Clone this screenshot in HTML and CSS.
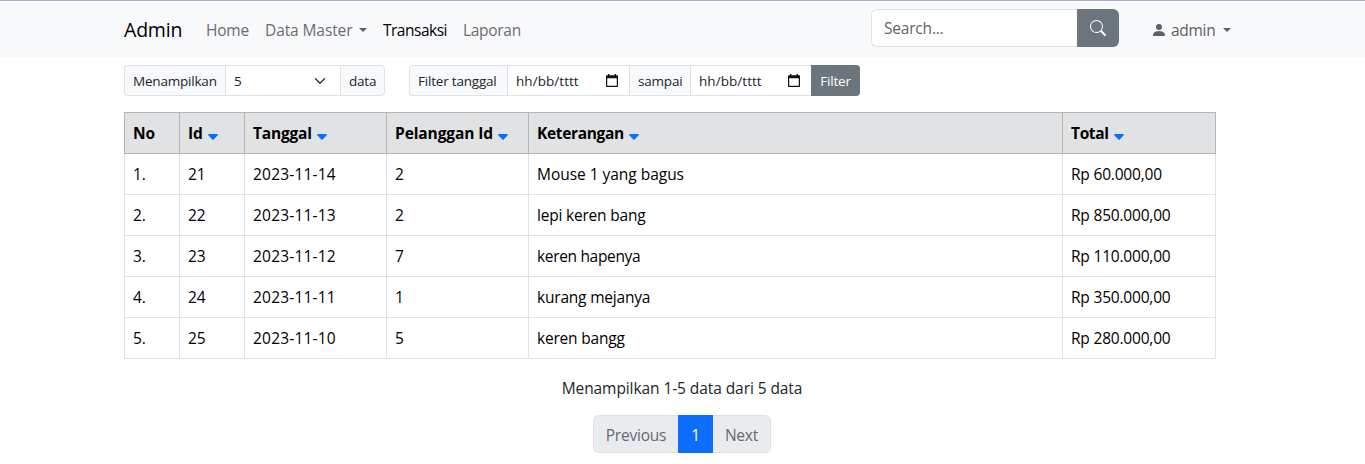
FILE: index.html
```html
<!DOCTYPE html>
<html lang="id">
<head>
<meta charset="utf-8">
<title>Transaksi</title>
<link rel="stylesheet" href="styles.css">
</head>
<body>
<nav class="navbar">
  <div class="container nav-row">
    <a class="brand">Admin</a>
    <ul class="nav-links">
      <li class="nav-home">Home</li>
      <li class="nav-master">Data Master<span class="caret"></span></li>
      <li class="nav-trans active">Transaksi</li>
      <li class="nav-report">Laporan</li>
    </ul>
    <form class="search">
      <div class="search-input">Search...</div>
      <div class="search-button">
        <svg width="16" height="16" viewBox="0 0 16 16" fill="currentColor"><path d="M11.742 10.344a6.5 6.5 0 1 0-1.397 1.398h-.001c.03.04.062.078.098.115l3.85 3.85a1 1 0 0 0 1.415-1.414l-3.85-3.85a1.007 1.007 0 0 0-.115-.1zM12 6.5a5.5 5.5 0 1 1-11 0 5.5 5.5 0 0 1 11 0z"/></svg>
      </div>
    </form>
    <div class="user">
      <svg width="16" height="16" viewBox="0 0 16 16" fill="currentColor"><path d="M3 14s-1 0-1-1 1-4 6-4 6 3 6 4-1 1-1 1zm5-6a3 3 0 1 0 0-6 3 3 0 0 0 0 6"/></svg>
      <span class="user-name">admin</span><span class="caret"></span>
    </div>
  </div>
</nav>
<main class="container">
  <div class="filters">
    <div class="group">
      <span class="addon w-show">Menampilkan</span>
      <div class="field w-select">5
        <svg width="16" height="12" viewBox="0 0 16 16" fill="none" stroke="#343a40" stroke-width="2" stroke-linecap="round" stroke-linejoin="round"><path d="m2 5 6 6 6-6"/></svg>
      </div>
      <span class="addon w-data">data</span>
    </div>
    <div class="group">
      <span class="addon w-date">Filter tanggal</span>
      <div class="field w-from"><span class="date-text">hh/bb/tttt</span>
        <svg class="calendar" width="12" height="13" viewBox="0 0 12 13" fill="#111"><path d="M2 0h1.4v1.3h5.2V0H10v1.3h1.2c.5 0 .8.3.8.8v10c0 .5-.3.9-.8.9H.8c-.5 0-.8-.4-.8-.9v-10c0-.5.3-.8.8-.8H2zM1.2 4.2v7.6h9.6V4.2z"/></svg>
      </div>
      <span class="addon w-until">sampai</span>
      <div class="field w-to"><span class="date-text">hh/bb/tttt</span>
        <svg class="calendar" width="12" height="13" viewBox="0 0 12 13" fill="#111"><path d="M2 0h1.4v1.3h5.2V0H10v1.3h1.2c.5 0 .8.3.8.8v10c0 .5-.3.9-.8.9H.8c-.5 0-.8-.4-.8-.9v-10c0-.5.3-.8.8-.8H2zM1.2 4.2v7.6h9.6V4.2z"/></svg>
      </div>
      <span class="filter-button">Filter</span>
    </div>
  </div>
  <table class="data">
    <colgroup><col class="c-no"><col class="c-id"><col class="c-date"><col class="c-cust"><col class="c-note"><col class="c-total"></colgroup>
    <thead>
      <tr>
        <th>No</th>
        <th>Id<svg class="sort" width="10" height="6" viewBox="0 0 10 6"><path d="M.8 0h8.4c.8 0 1 .8.5 1.3L5.7 5.6c-.4.5-1 .5-1.4 0L.3 1.3C-.2.8 0 0 .8 0z"/></svg></th>
        <th>Tanggal<svg class="sort" width="10" height="6" viewBox="0 0 10 6"><path d="M.8 0h8.4c.8 0 1 .8.5 1.3L5.7 5.6c-.4.5-1 .5-1.4 0L.3 1.3C-.2.8 0 0 .8 0z"/></svg></th>
        <th class="th-cust">Pelanggan Id<svg class="sort" width="10" height="6" viewBox="0 0 10 6"><path d="M.8 0h8.4c.8 0 1 .8.5 1.3L5.7 5.6c-.4.5-1 .5-1.4 0L.3 1.3C-.2.8 0 0 .8 0z"/></svg></th>
        <th class="th-note">Keterangan<svg class="sort" width="10" height="6" viewBox="0 0 10 6"><path d="M.8 0h8.4c.8 0 1 .8.5 1.3L5.7 5.6c-.4.5-1 .5-1.4 0L.3 1.3C-.2.8 0 0 .8 0z"/></svg></th>
        <th class="th-total">Total<svg class="sort" width="10" height="6" viewBox="0 0 10 6"><path d="M.8 0h8.4c.8 0 1 .8.5 1.3L5.7 5.6c-.4.5-1 .5-1.4 0L.3 1.3C-.2.8 0 0 .8 0z"/></svg></th>
      </tr>
    </thead>
    <tbody>
      <tr><td>1.</td><td>21</td><td class="date">2023-11-14</td><td>2</td><td class="wide">Mouse 1 yang bagus</td><td>Rp 60.000,00</td></tr>
      <tr><td>2.</td><td>22</td><td class="date">2023-11-13</td><td>2</td><td>lepi keren bang</td><td>Rp 850.000,00</td></tr>
      <tr><td>3.</td><td>23</td><td class="date">2023-11-12</td><td>7</td><td class="tight">keren hapenya</td><td>Rp 110.000,00</td></tr>
      <tr><td>4.</td><td>24</td><td class="date">2023-11-11</td><td>1</td><td>kurang mejanya</td><td>Rp 350.000,00</td></tr>
      <tr><td>5.</td><td>25</td><td class="date">2023-11-10</td><td>5</td><td>keren bangg</td><td>Rp 280.000,00</td></tr>
    </tbody>
  </table>
  <p class="summary">Menampilkan 1-5 data dari 5 data</p>
  <div class="pagination">
    <span class="page prev">Previous</span>
    <span class="page current">1</span>
    <span class="page next">Next</span>
  </div>
</main>
</body>
</html>
```
FILE: styles.css
```css
* { box-sizing: border-box; }
body {
  margin: 0;
  background: #fff;
  color: #212529;
  font: 15.5px/24px "Open Sans", "Noto Sans", sans-serif;
  letter-spacing: -0.2px;
  overflow: hidden;
}
.container { width: 1117px; padding-right: 25px; margin-left: 124px; }
.navbar { height: 57px; background: #f8f9fb; border-top: 1px solid #a6b0c9; }
.nav-row { display: flex; align-items: center; height: 56px; padding: 0; }
.nav-row > * { flex-shrink: 0; }
.brand { width: 82px; padding-top: 1px; font-size: 19.5px; line-height: 30px; color: #000; }
.nav-links { display: flex; margin: 0; padding: 1px 0 0; list-style: none; color: #6b6c6d; }
.nav-links li { white-space: nowrap; }
.nav-home { width: 59px; }
.nav-master { width: 118px; letter-spacing: -0.1px; }
.nav-trans { width: 80px; letter-spacing: -0.5px; }
.nav-report { width: 60px; letter-spacing: -0.3px; }
.nav-links .active { color: #000; }
.caret {
  display: inline-block;
  margin-left: 7px;
  vertical-align: 4px;
  border: 4.5px solid transparent;
  border-top-color: #5f6061;
  border-bottom: 0;
}
.search { display: flex; width: 248px; height: 38px; margin: 0 0 2px 348px; }
.search-input {
  width: 206px;
  padding: 6px 12px;
  border: 1px solid #dee2e6;
  border-right: 0;
  border-radius: 6px 0 0 6px;
  background: #fff;
  color: #5f6468;
}
.search-button {
  display: flex;
  align-items: center;
  justify-content: center;
  width: 42px;
  border-radius: 0 6px 6px 0;
  background: #6c757d;
  color: #fff;
}
.user { display: flex; align-items: center; margin-left: 32px; padding-top: 1px; color: #5f6061; }
.user-name { margin-left: 4px; letter-spacing: -0.3px; }
.user .caret { margin-left: 8px; }
.filters { display: flex; gap: 24px; margin-top: 8px; font-size: 13.5px; line-height: 21px; }
.group { display: flex; height: 31px; }
.addon, .field { border: 1px solid #dee2e6; border-right: 0; padding: 5px 8px 3px; white-space: nowrap; }
.addon { background: #f8f9fa; }
.addon:first-child { border-radius: 4px 0 0 4px; }
.addon:last-child { border-right: 1px solid #dee2e6; border-radius: 0 4px 4px 0; }
.field { display: flex; align-items: center; justify-content: space-between; background: #fff; }
.w-show { width: 101px; }
.w-select { width: 115px; padding-right: 12px; }
.w-data { width: 45px; }
.w-date { width: 98px; }
.w-from { width: 122px; padding-right: 11px; }
.w-until { width: 61px; }
.w-to { width: 121px; padding-right: 11px; }
.date-text { letter-spacing: 0.05px; }
.field svg { margin-bottom: 2px; }
.filter-button {
  width: 49px;
  padding: 6px 0 4px;
  border-radius: 0 4px 4px 0;
  background: #6c757d;
  color: #fff;
  text-align: center;
}
.data {
  width: 1092px;
  margin-top: 16px;
  border-spacing: 0;
  table-layout: fixed;
  color: #000;
}
.c-no { width: 56px; }
.c-id { width: 65px; }
.c-date, .c-cust { width: 142px; }
.c-note { width: 534px; }
.c-total { width: 153px; }
th, td {
  height: 41px;
  padding: 8px;
  border: solid #dee2e6;
  border-width: 0 1px 1px 0;
  text-align: left;
  white-space: nowrap;
}
th { height: 42px; border-color: #b4b5b7; border-top-width: 1px; background: #e1e2e4; }
th:first-child, td:first-child { border-left-width: 1px; }
.date { letter-spacing: 0.2px; }
.wide { letter-spacing: -0.03px; }
.tight { letter-spacing: -0.33px; }
.th-cust { letter-spacing: -0.1px; }
.th-note { letter-spacing: -0.35px; }
.th-total { letter-spacing: -0.35px; }
.sort { margin-left: 5px; vertical-align: -1px; fill: #0d6efd; }
.summary { width: 1116px; margin: 17px 0 15px; text-align: center; letter-spacing: -0.08px; }
.pagination { display: flex; justify-content: center; width: 1116px; }
.page { height: 38px; padding: 7px 0; text-align: center; background: #e9ecef; color: #636a70; border: 1px solid #dee2e6; }
.prev { width: 85px; border-right: 0; border-radius: 6px 0 0 6px; }
.current { width: 35px; border-color: #0d6efd; background: #0d6efd; color: #fff; }
.next { width: 58px; border-left: 0; border-radius: 0 6px 6px 0; }
```
